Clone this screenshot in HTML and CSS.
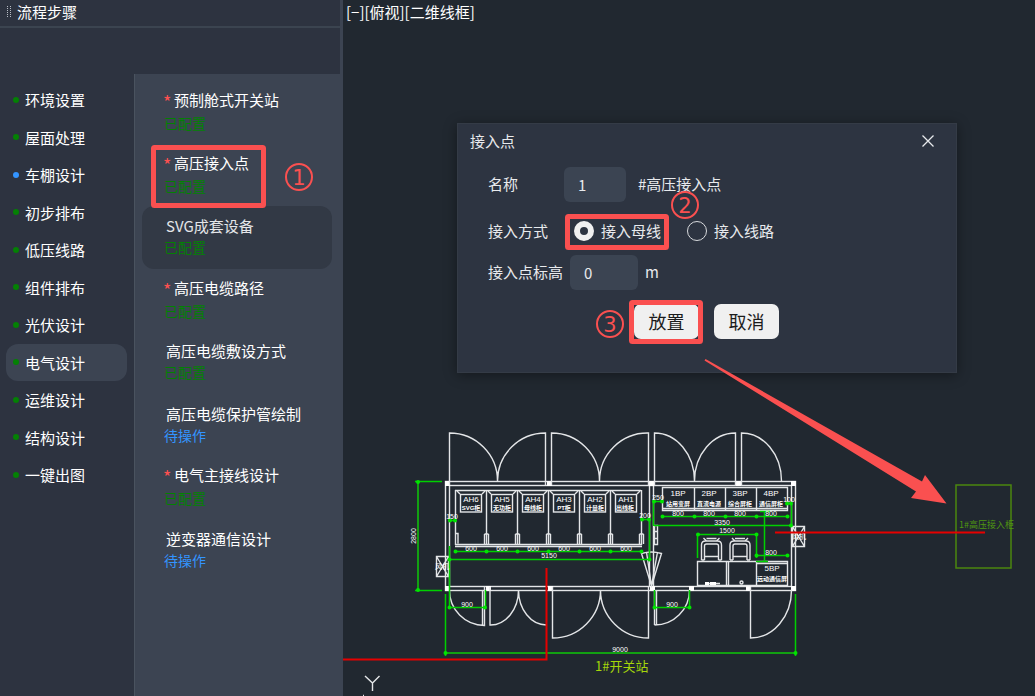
FILE: index.html
```html
<!DOCTYPE html>
<html lang="zh-CN">
<head>
<meta charset="utf-8">
<title>流程步骤</title>
<link rel="stylesheet" href="styles.css">
</head>
<body>
<div class="app">
  <aside class="panel">
    <header class="panel-head">
      <svg class="grip" width="6" height="12" viewBox="0 0 6 12"><path d="M1.5 0v12M4.5 0v12" stroke="#b9bec6" stroke-dasharray="1 1"/></svg>
      <span>流程步骤</span>
    </header>
    <div class="panel-body">
      <nav class="steps">
        <button class="step">环境设置</button>
        <button class="step">屋面处理</button>
        <button class="step current">车棚设计</button>
        <button class="step">初步排布</button>
        <button class="step">低压线路</button>
        <button class="step">组件排布</button>
        <button class="step">光伏设计</button>
        <button class="step active">电气设计</button>
        <button class="step">运维设计</button>
        <button class="step">结构设计</button>
        <button class="step">一键出图</button>
      </nav>
      <div class="tasks">
        <div class="task-list">
          <button class="task must"><span class="name">预制舱式开关站</span><span class="state">已配置</span></button>
          <button class="task must"><span class="name">高压接入点</span><span class="state">已配置</span></button>
          <button class="task hover"><span class="name">SVG成套设备</span><span class="state">已配置</span></button>
          <button class="task must"><span class="name">高压电缆路径</span><span class="state">已配置</span></button>
          <button class="task"><span class="name">高压电缆敷设方式</span><span class="state">已配置</span></button>
          <button class="task"><span class="name">高压电缆保护管绘制</span><span class="state todo">待操作</span></button>
          <button class="task must"><span class="name">电气主接线设计</span><span class="state">已配置</span></button>
          <button class="task"><span class="name">逆变器通信设计</span><span class="state todo">待操作</span></button>
        </div>
      </div>
    </div>
  </aside>

  <main class="canvas">
    <div class="view-label">[−][俯视][二维线框]</div>
    <svg class="cad" viewBox="343 0 692 696" preserveAspectRatio="xMinYMin meet">
      <defs>
        <g id="cab">
          <path d="M0 490.5h31M31.5 490v55"/>
          <rect x="5.5" y="494.5" width="21" height="17.5"/>
          <path d="M2 491l3 3M30 491l-3 3M29.5 534v10M33.5 534v10M29.5 534h4"/>
        </g>
        <g id="chair">
          <path d="M0 560v-15q0-4 4-4h12q4 0 4 4v15M3 560v-14q0-2 2-2h10q2 0 2 2v14M0 560h3M17 560h3M3 556.5h14M2 538l3 3h10l3-3M5 538.5h10"/>
        </g>
        <g id="post"><rect x="-2" y="-2" width="5" height="5"/></g>
      </defs>

      <!-- walls -->
      <g class="w">
        <rect x="445.5" y="481.5" width="350" height="109"/>
        <rect x="449.5" y="485.5" width="342" height="101"/>
        <path d="M649.5 485v101M653.5 485v101"/>
      </g>
      <g class="solid">
        <use href="#post" x="447" y="483"/><use href="#post" x="549" y="483"/><use href="#post" x="651" y="483"/><use href="#post" x="738" y="483"/><use href="#post" x="793" y="483"/>
        <use href="#post" x="447" y="588"/><use href="#post" x="488" y="588"/><use href="#post" x="550" y="588"/><use href="#post" x="652" y="588"/><use href="#post" x="691" y="588"/><use href="#post" x="748" y="588"/><use href="#post" x="793" y="588"/>
      </g>

      <!-- doors -->
      <g class="w">
        <path d="M449.5 485v-52A48 48 0 0 1 497.5 481A48 48 0 0 1 545.5 433v52M551.5 485v-52A48 48 0 0 1 599.5 481A48 48 0 0 1 648.5 433v52M654.5 485v-52A40 48 0 0 1 694.5 481A41 48 0 0 1 735.5 433v52M741.5 485v-52A40 48 0 0 1 781.5 481"/>
        <path d="M449.5 590A35 35 0 0 0 484.5 625.5V587M482.5 590v35M490 587v38A28 35 0 0 0 518.5 590A28 35 0 0 0 546.5 625M552.5 587v51A48 48 0 0 0 600.5 590A48 48 0 0 0 648.5 638v-51M654.5 590v35M656.5 590v35M654.5 625A35 35 0 0 0 689.5 590M750.5 587v51A41 48 0 0 0 791.5 590"/>
        <path d="M651.5 586L641.5 553.5q10-3 20 0zM651.5 586l-5-34M651.5 586l6-34"/>
        <path d="M654.5 525.5h3v19h-3zM654 531.5h4M654 538.5h4"/>
        <path d="M436.5 556.5h12v20h-12zl12 20M448.5 556.5l-12 20M792.5 526.5h12v20h-12zl12 20M804.5 526.5l-12 20"/>
      </g>

      <!-- switch cabinets -->
      <g class="w">
        <path d="M455.5 490v55M456 533.5h2v10M455 544.5h187M455 546.5h187"/>
        <use href="#cab" x="455"/><use href="#cab" x="486"/><use href="#cab" x="517"/><use href="#cab" x="548"/><use href="#cab" x="579"/><use href="#cab" x="610"/>
        <path d="M662.5 487.5h125v23h-125zM662 508.5h126M694.5 487v23M725.5 487v23M756.5 487v23"/>
        <path d="M697.5 561.5h90v24h-90zM726.5 561v24M728.5 561v24M756.5 561v24M756 563.5h31M705 583.5h15"/>
        <circle cx="741.5" cy="582.5" r="1.5"/>
        <use href="#chair" x="701.5"/><use href="#chair" x="730"/>
      </g>
      <g class="solid"><path d="M705 582h4v3h-4zM710 582h6v3h-6z"/></g>

      <!-- dimensions -->
      <g class="dim wide">
        <path d="M418 481v110M445 653h351"/>
      </g>
      <g class="dim">
        <path d="M415 481.5h27M415 590.5h27M445.5 594v62M795.5 594v62"/>
        <path d="M449.5 546v63M485.5 590v19M449 607.5h37M654.5 590v19M689.5 590v19M654 607.5h36"/>
        <path d="M455 551.5h187M449 559.5h201M449.5 520.5h6M641 519.5h8M649.5 519v40"/>
        <path d="M654 501.5h9M662 516.5h126M654 525.5h138M698 534.5h59M697.5 534v24M756.5 534v24M764.5 511v51M760 511.5h10M756 561.5h12M756 555.5h32M786 503.5h6M791.5 503v22M653.5 500v26"/>
      </g>
      <g class="tick">
        <path d="M418 482h0M418 590h0M445.5 653h0M795.5 653h0M449.5 607.5h0M485 607.5h0M654.5 607.5h0M689.5 607.5h0M455.5 551.5h0M486.5 551.5h0M517.5 551.5h0M548.5 551.5h0M579.5 551.5h0M610.5 551.5h0M641.5 551.5h0M449.5 559.5h0M649.5 559.5h0M450 520.5h0M455 520.5h0M642 519.5h0M649 519.5h0M654 501.5h0M662 501.5h0M662.5 516.5h0M694.5 516.5h0M725.5 516.5h0M756.5 516.5h0M787.5 516.5h0M791 525.5h0M698 534.5h0M756.5 534.5h0M756.5 555.5h0M787.5 555.5h0M787 503.5h0M791 503.5h0"/>
      </g>

      <g class="cap">
        <text x="471" y="502">AH6</text><text x="502" y="502">AH5</text><text x="533" y="502">AH4</text><text x="564" y="502">AH3</text><text x="595" y="502">AH2</text><text x="626" y="502">AH1</text>
        <text x="678" y="496">1BP</text><text x="709" y="496">2BP</text><text x="740" y="496">3BP</text><text x="771" y="496">4BP</text><text x="772" y="571">5BP</text>
      </g>
      <g class="sub">
        <text x="471" y="510">SVG柜</text><text x="502" y="510">无功柜</text><text x="533" y="510">母线柜</text><text x="564" y="510">PT柜</text><text x="595" y="510">计量柜</text><text x="625" y="510">出线柜</text>
        <text x="678" y="506">站用变屏</text><text x="709" y="506">直流电源</text><text x="740" y="506">综合屏柜</text><text x="771" y="506">通信屏柜</text><text x="772" y="581">远动通信屏</text>
      </g>
      <g class="num">
        <text x="471" y="551">600</text><text x="502" y="551">600</text><text x="533" y="551">600</text><text x="564" y="551">600</text><text x="595" y="551">600</text><text x="626" y="551">600</text>
        <text x="549" y="558">5150</text><text x="452" y="519">150</text><text x="645" y="518">200</text><text x="658" y="500">250</text><text x="789" y="502">100</text>
        <text x="678" y="516">800</text><text x="709" y="516">800</text><text x="740" y="516">800</text><text x="771" y="516">800</text><text x="722" y="525">3350</text><text x="727" y="533">1500</text><text x="771" y="555">800</text>
        <text x="467" y="607">900</text><text x="672" y="607">900</text><text x="620" y="652">9000</text>
        <text x="442" y="569">风机</text><text x="799" y="539">风机</text>
        <text transform="translate(416 536) rotate(-90)">2800</text>
      </g>

      <text class="station" x="595" y="671">1#开关站</text>
      <rect class="point" x="956" y="485" width="55" height="83"/>
      <text class="point-label" x="959" y="528">1#高压接入柜</text>
      <path class="cable" d="M343 659.5h203.5V568M775 532.5h210"/>
      <path class="w" d="M365 676l7.500 7 7-7M372.5 683v8M363 695.5h1"/>
    </svg>

    <form class="dialog">
      <header class="dialog-head">
        <h1>接入点</h1>
        <button type="button" class="close" aria-label="关闭"><svg width="12" height="12" viewBox="0 0 12 12"><path d="M0.5 0.5l11 11M11.5 0.5l-11 11" stroke="#e8eaed" stroke-width="1.3"/></svg></button>
      </header>
      <div class="row name-row">
        <label for="no">名称</label>
        <input id="no" class="field" type="text" value="1">
        <span>#高压接入点</span>
      </div>
      <div class="row mode-row">
        <span class="label">接入方式</span>
        <label class="option"><input type="radio" name="mode" checked>接入母线</label>
        <label class="option"><input type="radio" name="mode">接入线路</label>
      </div>
      <div class="row level-row">
        <label for="level">接入点标高</label>
        <input id="level" class="field" type="text" value="0">
        <span>m</span>
      </div>
      <div class="actions">
        <button type="button">放置</button>
        <button type="button">取消</button>
      </div>
    </form>
  </main>

  <svg class="marks">
    <g class="frame">
      <rect x="153.5" y="147.5" width="110" height="58" rx="1"/>
      <rect x="567.5" y="216.5" width="99" height="31" rx="1"/>
      <rect x="631.5" y="302.5" width="69" height="39" rx="1"/>
    </g>
    <g class="ring"><circle cx="299" cy="177" r="13"/><circle cx="685" cy="205" r="13"/><circle cx="610" cy="324" r="13"/></g>
    <g class="digit"><text x="299" y="185">1</text><text x="685" y="213">2</text><text x="610" y="332">3</text></g>
    <path class="arrow" d="M705.500 359L922 481.500l3-6.500 21.500 28.500-35.500-5.500 5-6.500L704.500 360.500z"/>
  </svg>
</div>
</body>
</html>
```
FILE: styles.css
```css
* { box-sizing: border-box; }
body {
  margin: 0;
  background: #212830;
  color: #fff;
  font: 15px/22px "Noto Sans CJK SC", "Noto Sans", sans-serif;
}
button, input { font: inherit; color: inherit; }
button { border: 0; background: none; padding: 0; text-align: left; }

.app {
  position: relative;
  display: grid;
  grid-template-columns: 343px 1fr;
  min-height: 100vh;
  overflow: hidden;
}

/* step panel */
.panel {
  display: flex;
  flex-direction: column;
  background: #2d3340;
  border-right: 3px solid #3c4452;
}
.panel-head {
  display: flex;
  align-items: center;
  gap: 5px;
  height: 28px;
  padding: 0 0 2px 6px;
  border-bottom: 2px solid #3b4450;
}
.panel-body {
  flex: 1;
  display: grid;
  grid-template-columns: 134px 1fr;
  margin-top: 46px;
}
.steps {
  display: flex;
  flex-direction: column;
  padding: 7px 7px 0 6px;
}
.step {
  display: flex;
  align-items: center;
  gap: 6px;
  padding-left: 7px;
  line-height: 2.5;
  border-radius: 12px;
}
.step::before {
  content: "";
  width: 6px;
  height: 6px;
  border-radius: 50%;
  background: #048004;
}
.step.current::before { background: #3394ff; }
.step.active { background: #3c4452; }

.tasks {
  padding: 7px 8px 0 7px;
  margin-right: -3px;
  background: #3c4452;
  border-left: 1px solid #4a535f;
}
.task-list {
  display: grid;
  grid-template-rows: repeat(8, 1fr);
  height: 500px;
  margin-right: 3px;
}
.task {
  display: flex;
  flex-direction: column;
  padding: 9px 0 0 22px;
  border-radius: 12px;
}
.task .name { padding-left: 2px; }
.task .state { line-height: 20px; }
.task.must .name { padding-left: 0; line-height: 20px; }
.task.must .name::before {
  content: "*";
  display: inline-block;
  width: 10px;
  margin-left: -1px;
  padding-right: 1px;
  box-sizing: content-box;
  font-size: 18px;
  line-height: 16px;
  vertical-align: -3px;
  color: #ff5050;
}
.task.must .state { line-height: 27px; }
.task.hover { background: #323945; }
.task.hover .name { color: #e4e6e9; }
.state { font-size: 14px; color: #048004; }
.state.todo { color: #3394ff; }

/* drawing area */
.canvas { position: relative; overflow: hidden; }
.view-label { padding: 1px 3px; }
.cad {
  position: absolute;
  top: 0;
  left: 0;
  width: 100%;
  height: 100%;
}
.w { fill: none; stroke: #e4e6e8; stroke-width: 1.4; }
.solid { fill: #fff; }
.dim { fill: none; stroke: #00d000; stroke-width: 1.5; }
.dim.wide { stroke: #12a012; stroke-width: 2; }
.tick { stroke: #00e400; stroke-width: 4; stroke-linecap: round; }
.cap, .sub, .num { fill: #fff; text-anchor: middle; font-family: "Liberation Sans", "Noto Sans CJK SC", sans-serif; }
.cap { font-size: 8px; }
.sub { font-size: 6px; font-weight: 700; }
.num { font-size: 7px; }
.station { fill: #a5d60a; font-size: 13px; }
.point { fill: none; stroke: #4b860e; stroke-width: 1.5; }
.point-label { fill: #4f9610; font-size: 9px; }
.cable { fill: none; stroke: #e60000; stroke-width: 2; }

/* dialog */
.dialog {
  position: absolute;
  top: 123px;
  left: 114px;
  width: 500px;
  padding: 6px 18px 33px 12px;
  background: #2d3441;
  border: 1px solid #343b46;
  box-shadow: 0 2px 12px rgba(0, 0, 0, .4);
  color: #e8eaed;
}
.dialog-head { display: flex; align-items: center; justify-content: space-between; }
.dialog-head h1 { margin: 0; font-size: 15px; line-height: 22px; font-weight: 400; }
.close { display: grid; place-items: center; width: 20px; height: 22px; }
.row { display: flex; align-items: center; padding-left: 18px; }
.name-row { margin-top: 15px; gap: 12px; }
.name-row label { width: 64px; }
.name-row label, .name-row span, .level-row label, .level-row span { padding-bottom: 2px; }
.mode-row { margin-top: 18px; gap: 26px; }
.level-row { margin-top: 13px; gap: 7px; }
.field {
  width: 62px;
  height: 35px;
  padding: 0 14px;
  border: 0;
  border-radius: 6px;
  background: #3b4452;
}
.level-row .field { width: 68px; }
.option { display: flex; align-items: center; gap: 7px; }
.option input {
  appearance: none;
  width: 20px;
  height: 20px;
  margin: 0;
  border: 1px solid #d8dadd;
  border-radius: 50%;
}
.option input:checked { border: 6px solid #f0f0f0; }
.actions { display: flex; gap: 15px; margin: 14px 0 0 164px; }
.actions button {
  width: 65px;
  height: 35px;
  padding-bottom: 2px;
  border-radius: 7px;
  background: #f0f0f0;
  color: #1c1c1c;
  font-size: 18px;
  text-align: center;
}

/* callouts */
.marks {
  position: absolute;
  inset: 0;
  width: 100%;
  height: 100%;
  pointer-events: none;
}
.frame { fill: none; stroke: #fa5050; stroke-width: 5; }
.ring { fill: none; stroke: #fa5050; stroke-width: 2; }
.digit { fill: #fa5050; font-size: 21px; text-anchor: middle; font-family: "DejaVu Sans", sans-serif; }
.arrow { fill: #fa5050; }
```
